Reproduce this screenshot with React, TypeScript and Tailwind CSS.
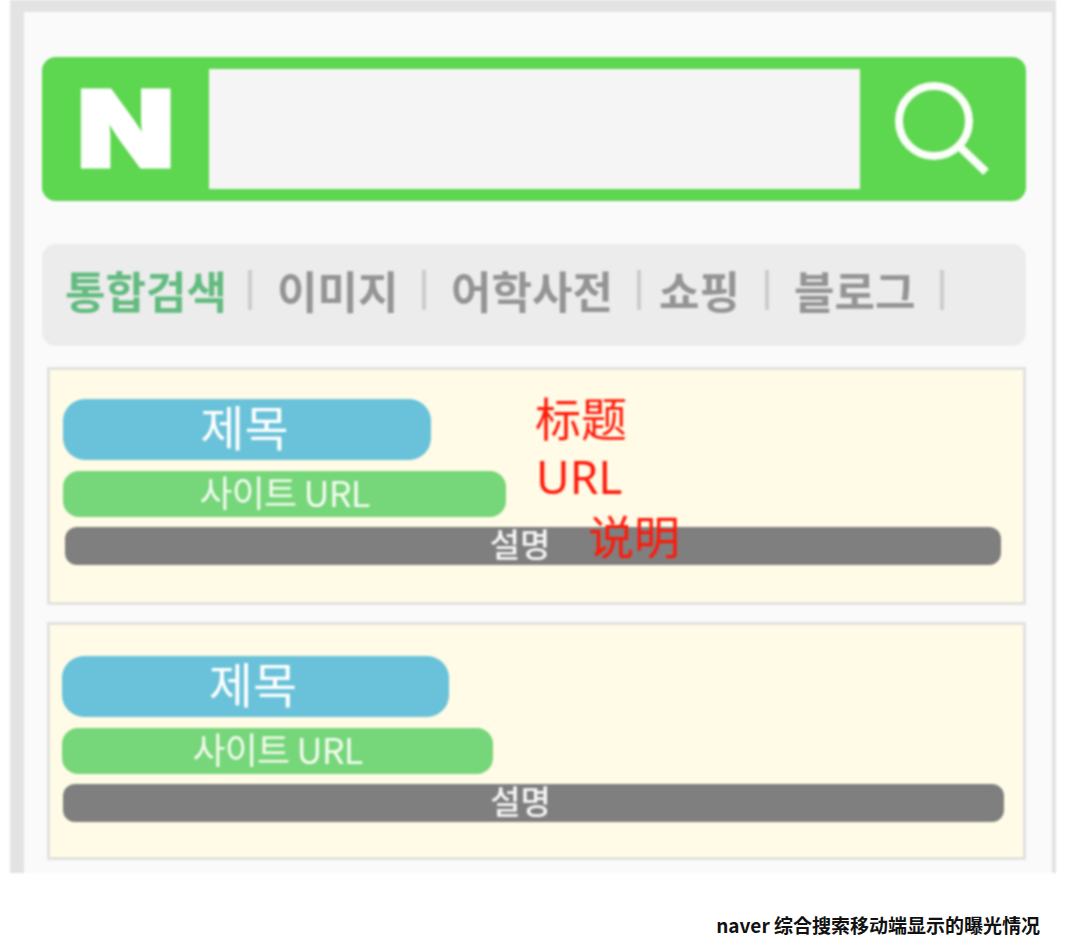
const KR = "font-['Noto_Sans_CJK_KR','Noto_Sans',sans-serif]";

type ResultCardProps = {
  className: string;
  titleWidth: string;
  urlWidth: string;
  descClass: string;
  children?: React.ReactNode;
};

function ResultCard({ className, titleWidth, urlWidth, descClass, children }: ResultCardProps) {
  return (
    <div className={`relative ml-[5px] h-[238px] border-[3px] border-[#e2e2de] bg-[#fffbe6] ${className}`}>
      <div className={`flex h-[61px] items-center justify-center rounded-[22px] bg-[#69c2d9] pr-[5px] pb-[10px] text-[48px] text-white ${titleWidth}`}>
        제목
      </div>
      <div className={`mt-[11px] flex h-[46px] items-center justify-center rounded-[16px] bg-[#76d67a] pb-[6px] text-[36px] tracking-[-0.8px] text-[#f4fbef] ${urlWidth}`}>
        사이트 URL
      </div>
      <div className={`mt-[10px] flex h-[38px] items-center justify-center rounded-[12px] bg-[#7f7f7f] pr-[26px] pb-[4px] text-[33px] font-medium text-[#f6f6f6] ${descClass}`}>
        설명
      </div>
      {children}
    </div>
  );
}

export default function App() {
  return (
    <div className={`h-[940px] w-[1080px] bg-white ${KR}`}>
      <div className="ml-[10px] h-[873px] w-[1046px] border-t-[12px] border-r-[4px] border-l-[14px] border-[#e3e3e3] bg-[#fafafa] px-[18px] pt-[45px] pr-[26px] blur-[0.8px]">
        <div className="flex h-[144px] items-stretch rounded-[14px] bg-[#5dd650]">
          <div className="flex w-[167px] items-center justify-center">
            <span className="scale-x-[1.2] font-['Inter',sans-serif] text-[106px] leading-none font-black text-white [-webkit-text-stroke:3px_white]">N</span>
          </div>
          <div className="my-[12px] flex-1 bg-[#f5f5f5]" />
          <div className="flex w-[166px] items-center justify-center">
            <svg width="110" height="110" viewBox="0 0 110 110" fill="none" stroke="#fafdf8" strokeWidth="8">
              <circle cx="46" cy="47" r="35" />
              <path d="M72 73 L98 98" strokeWidth="8" />
            </svg>
          </div>
        </div>

        <div className="mt-[43px] flex h-[102px] items-center rounded-[14px] bg-[#ececec] pb-[10px] pl-[23px] text-[44px] leading-none font-bold text-[#949494]">
          <span className="w-[160px] whitespace-nowrap text-[#63bb80]">통합검색</span>
          <i className="mr-[25px] ml-[23px] h-[40px] w-[4px] bg-[#cccccc]" />
          <span className="w-[119px] whitespace-nowrap">이미지</span>
          <i className="mr-[25px] ml-[26px] h-[40px] w-[4px] bg-[#cccccc]" />
          <span className="w-[159px] whitespace-nowrap">어학사전</span>
          <i className="mr-[18px] ml-[27px] h-[40px] w-[4px] bg-[#cccccc]" />
          <span className="w-[78px] whitespace-nowrap">쇼핑</span>
          <i className="mr-[25px] ml-[28px] h-[40px] w-[4px] bg-[#cccccc]" />
          <span className="w-[120px] whitespace-nowrap">블로그</span>
          <i className="ml-[26px] h-[40px] w-[4px] bg-[#cccccc]" />
        </div>

        <ResultCard
          className="mt-[21px] pt-[29px] pl-[13px]"
          titleWidth="w-[368px]"
          urlWidth="w-[443px]"
          descClass="ml-[2px] w-[936px]"
        >
          <span className="absolute top-[23px] left-[485px] text-[46px] leading-none text-[#ff1a0a]">标题</span>
          <span className="absolute top-[83px] left-[486px] font-['Noto_Sans',sans-serif] text-[46px] leading-none text-[#ff1a0a]">URL</span>
          <span className="absolute top-[141px] left-[538px] text-[46px] leading-none text-[#ff1a0a]">说明</span>
        </ResultCard>

        <ResultCard
          className="mt-[17px] pt-[31px] pl-[12px]"
          titleWidth="w-[387px]"
          urlWidth="w-[431px]"
          descClass="ml-[1px] w-[941px]"
        />
      </div>
      <p className="mt-[41px] pr-[40px] text-right text-[19px] leading-[22px] font-bold text-[#111]">
        naver 综合搜索移动端显示的曝光情况
      </p>
    </div>
  );
}
